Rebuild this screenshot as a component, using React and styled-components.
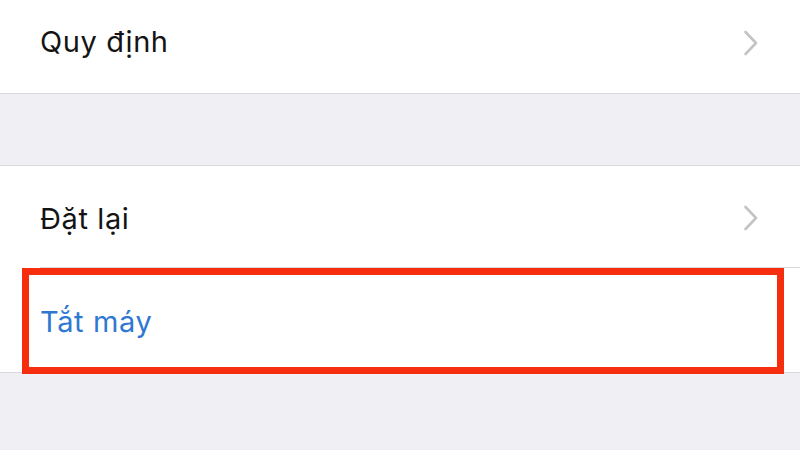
import React from 'react'
import styled, { createGlobalStyle } from 'styled-components'

const GlobalStyle = createGlobalStyle`
  html, body {
    margin: 0;
    padding: 0;
    background: #efeff4;
  }
  body {
    font-family: "Inter", "Liberation Sans", sans-serif;
    -webkit-font-smoothing: antialiased;
  }
`

const Page = styled.div`
  width: 800px;
  height: 450px;
  overflow: hidden;
  background: #efeff4;
  display: flex;
  flex-direction: column;
`

const Group = styled.div`
  background: #fff;
  border-top: ${p => (p.$top ? '1px solid #dadade' : 'none')};
  border-bottom: 1px solid #dadade;
  margin-top: ${p => p.$gap || 0}px;
`

const Row = styled.div`
  position: relative;
  height: ${p => p.$height}px;
  display: flex;
  align-items: center;
  justify-content: space-between;
  padding: 0 41px 0 40px;
  box-sizing: border-box;

  /* inset divider like iOS table cells */
  &::after {
    content: '';
    display: ${p => (p.$divider ? 'block' : 'none')};
    position: absolute;
    left: 40px;
    right: 0;
    bottom: 0;
    height: 1px;
    background: #dadade;
  }
`

const Label = styled.span`
  font-size: 29px;
  letter-spacing: 0.6px;
  color: ${p => (p.$action ? '#2f78d2' : '#141414')};
  transform: translateY(${p => p.$shift || 0}px);
`

const Highlight = styled.div`
  position: absolute;
  left: 22px;
  right: 16px;
  top: 0;
  bottom: -2px;
  border: 7px solid #f72d10;
  pointer-events: none;
`

const Chevron = ({ shift = 0 }) => (
  <svg width="16" height="26" viewBox="0 0 16 26" style={{ transform: `translateY(${shift}px)` }}>
    <polyline
      points="2.5,2 13,13 2.5,24"
      fill="none"
      stroke="#c3c3c8"
      strokeWidth="2.6"
      strokeLinecap="round"
      strokeLinejoin="round"
    />
  </svg>
)

export default function App() {
  return (
    <Page>
      <GlobalStyle />
      <Group>
        <Row $height={93}>
          <Label $shift={-5}>Quy định</Label>
          <Chevron shift={-4} />
        </Row>
      </Group>
      <Group $top $gap={71}>
        <Row $height={102} $divider>
          <Label $shift={1}>Đặt lại</Label>
          <Chevron shift={1} />
        </Row>
        <Row $height={104}>
          <Label $action $shift={1}>Tắt máy</Label>
          <Highlight />
        </Row>
      </Group>
    </Page>
  )
}
